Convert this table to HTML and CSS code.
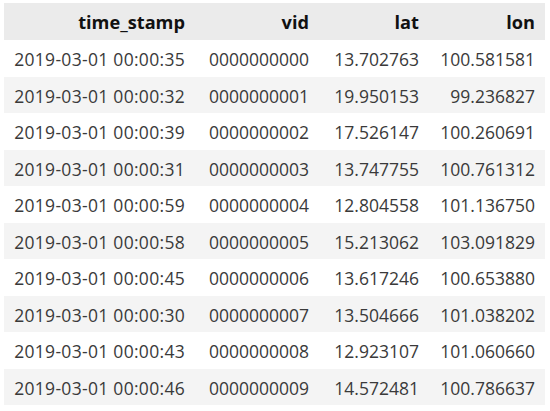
FILE: index.html
```html
<!DOCTYPE html>
<html>
<head>
<meta charset="utf-8">
<link rel="stylesheet" href="styles.css">
</head>
<body>
<table class="df">
  <colgroup>
    <col class="c1"><col class="c2"><col class="c3"><col class="c4">
  </colgroup>
  <thead>
    <tr><th>time_stamp</th><th>vid</th><th>lat</th><th>lon</th></tr>
  </thead>
  <tbody>
    <tr><td class="ts">2019-03-01 00:00:35</td><td>0000000000</td><td>13.702763</td><td>100.581581</td></tr>
    <tr><td class="ts">2019-03-01 00:00:32</td><td>0000000001</td><td>19.950153</td><td>99.236827</td></tr>
    <tr><td class="ts">2019-03-01 00:00:39</td><td>0000000002</td><td>17.526147</td><td>100.260691</td></tr>
    <tr><td class="ts">2019-03-01 00:00:31</td><td>0000000003</td><td>13.747755</td><td>100.761312</td></tr>
    <tr><td class="ts">2019-03-01 00:00:59</td><td>0000000004</td><td>12.804558</td><td>101.136750</td></tr>
    <tr><td class="ts">2019-03-01 00:00:58</td><td>0000000005</td><td>15.213062</td><td>103.091829</td></tr>
    <tr><td class="ts">2019-03-01 00:00:45</td><td>0000000006</td><td>13.617246</td><td>100.653880</td></tr>
    <tr><td class="ts">2019-03-01 00:00:30</td><td>0000000007</td><td>13.504666</td><td>101.038202</td></tr>
    <tr><td class="ts">2019-03-01 00:00:43</td><td>0000000008</td><td>12.923107</td><td>101.060660</td></tr>
    <tr><td class="ts">2019-03-01 00:00:46</td><td>0000000009</td><td>14.572481</td><td>100.786637</td></tr>
  </tbody>
</table>
</body>
</html>
```
FILE: styles.css
```css
html, body {
  margin: 0;
  padding: 0;
  background: #ffffff;
}
body {
  padding: 3px 0 0 4px;
}
.df {
  border-collapse: collapse;
  table-layout: fixed;
  width: 541px;
  font-family: "Open Sans", "Noto Sans", sans-serif;
  font-size: 17.5px;
  color: #3a3a3a;
}
.c1 { width: 192px; }
.c2 { width: 124px; }
.c3 { width: 110px; }
.c4 { width: 115px; }
.df th, .df td {
  padding: 0 11px 0 0;
  text-align: right;
  white-space: nowrap;
  vertical-align: middle;
}
.df th {
  height: 37px;
  background: #ebebeb;
  color: #111;
  font-weight: 700;
  font-size: 18.2px;
}
.df td {
  height: 34.5px;
  padding-top: 2px;
}
.df td.ts {
  letter-spacing: 0.3px;
}
.df tbody tr:nth-child(even) td {
  background: #f4f4f4;
}
.df td:last-child, .df th:last-child {
  padding-right: 10px;
}
```
